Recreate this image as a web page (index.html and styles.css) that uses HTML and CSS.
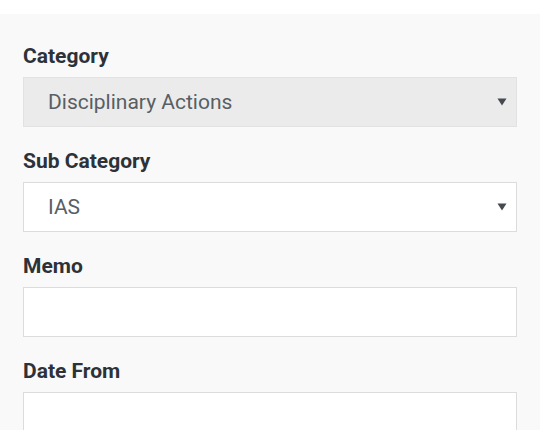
FILE: index.html
```html
<!DOCTYPE html>
<html>
<head>
<meta charset="utf-8">
<link rel="stylesheet" href="styles.css">
</head>
<body>
<div class="topbar"></div>
<form class="form">
  <div class="group">
    <label class="label">Category</label>
    <div class="field select disabled">
      <span class="value">Disciplinary Actions</span>
      <svg class="caret" width="10" height="8" viewBox="0 0 10 8"><path d="M0.5 0.5 L9.5 0.5 L5 7.5 Z" fill="#454a50"/></svg>
    </div>
  </div>
  <div class="group">
    <label class="label">Sub Category</label>
    <div class="field select">
      <span class="value">IAS</span>
      <svg class="caret" width="10" height="8" viewBox="0 0 10 8"><path d="M0.5 0.5 L9.5 0.5 L5 7.5 Z" fill="#454a50"/></svg>
    </div>
  </div>
  <div class="group">
    <label class="label">Memo</label>
    <div class="field"></div>
  </div>
  <div class="group">
    <label class="label">Date From</label>
    <div class="field"></div>
  </div>
</form>
</body>
</html>
```

FILE: styles.css
```css
html, body {
  margin: 0;
  padding: 0;
}
body {
  background: #f9f9f9;
  font-family: Roboto, "Liberation Sans", sans-serif;
  width: 540px;
  height: 430px;
  overflow: hidden;
}
.topbar {
  height: 14px;
  background: #ffffff;
}
.form {
  padding: 30px 23px 0 23px;
  display: flex;
  flex-direction: column;
}
.group {
  display: flex;
  flex-direction: column;
  margin-bottom: 22px;
}
.label {
  font-size: 21px;
  line-height: 24px;
  font-weight: 700;
  color: #2c3238;
  margin-bottom: 9px;
}
.field {
  height: 48px;
  border: 1px solid #dcdcdc;
  background: #ffffff;
  display: flex;
  align-items: center;
  padding: 0 9px 0 24px;
}
.field.disabled {
  background: #ebebeb;
  border-color: #e2e2e2;
}
.value {
  flex: 1;
  font-size: 21px;
  line-height: 48px;
  color: #585e64;
}
.caret {
  display: block;
}
```
